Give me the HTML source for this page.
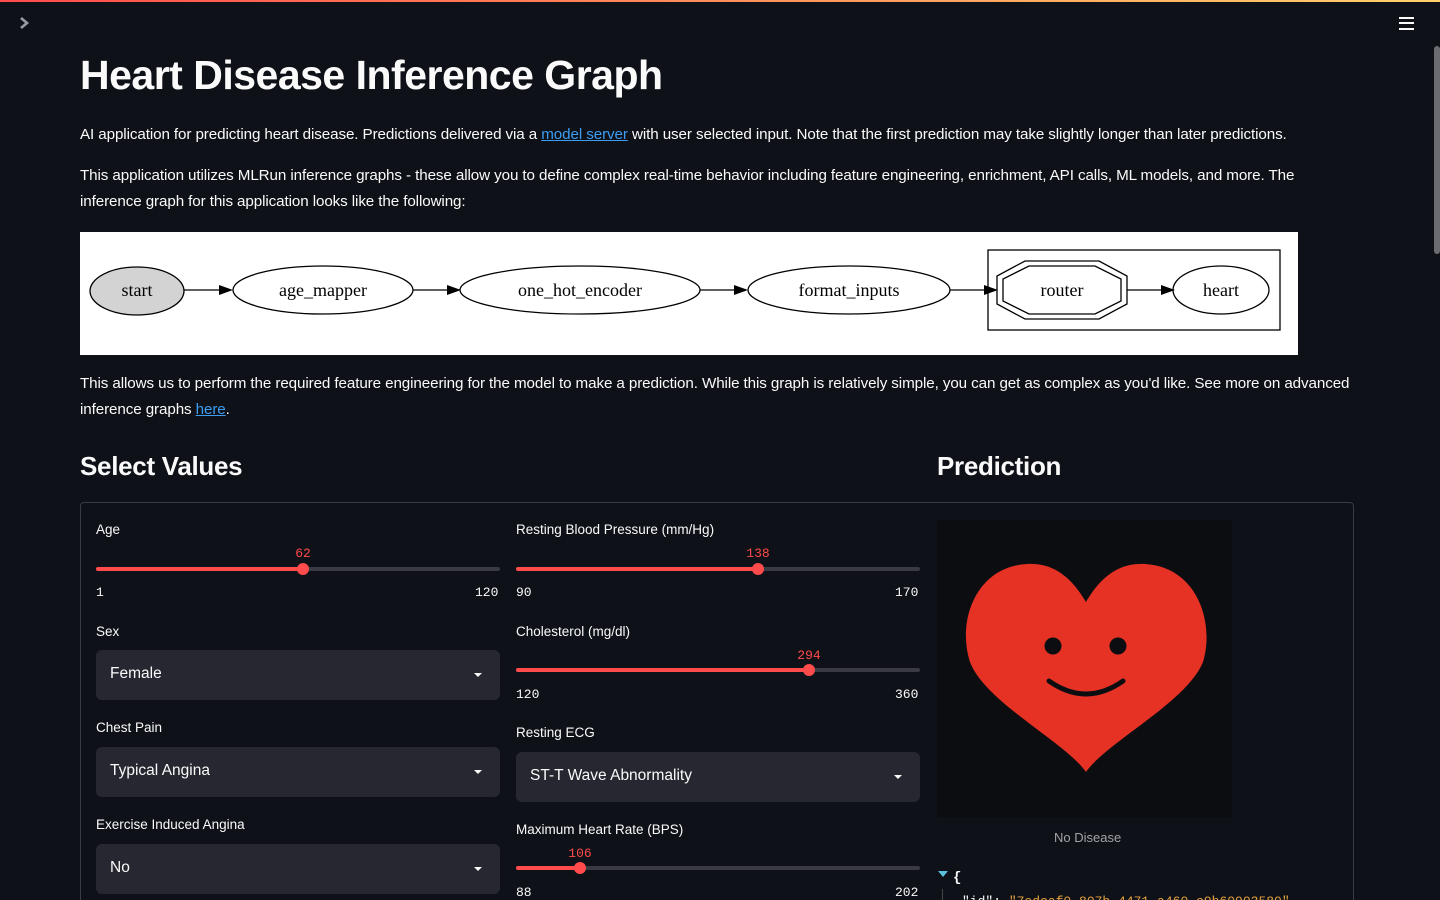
<!DOCTYPE html>
<html><head><meta charset="utf-8"><style>
*{margin:0;padding:0;box-sizing:border-box}
html,body{width:1440px;height:900px;overflow:hidden}
body{background:#0e1117;color:#fafafa;font-family:"Liberation Sans",sans-serif;position:relative}
.a{position:absolute;white-space:nowrap}
.topbar{position:absolute;left:0;top:0;width:1440px;height:2px;background:linear-gradient(90deg,#ff4b4b,#ffd16a)}
h1{position:absolute;left:80px;top:52px;font-size:41px;font-weight:700;letter-spacing:-0.5px}
p{position:absolute;left:80px;font-size:15.2px;line-height:26px;color:#fafafa}
a{color:#3d9df3;text-decoration:underline}
h2{position:absolute;font-size:26px;font-weight:700;letter-spacing:-0.3px}
.box{position:absolute;left:80px;top:502px;width:1274px;height:410px;border:1px solid #3a3c44;border-radius:4px}
.lbl{position:absolute;font-size:13.5px;color:#fafafa}
.mono{position:absolute;font-family:"Liberation Mono",monospace;font-size:13px;color:#fafafa}
.val{position:absolute;font-family:"Liberation Mono",monospace;font-size:13px;color:#ff4b4b;transform:translateX(-50%)}
.track{position:absolute;height:4px;border-radius:2px;background:#3a3b42}
.fill{position:absolute;left:0;top:0;height:4px;border-radius:2px;background:#ff4b4b}
.thumb{position:absolute;width:12px;height:12px;border-radius:50%;background:#ff4b4b;top:-4px;margin-left:-6px}
.sel{position:absolute;width:404px;height:50px;background:#262730;border-radius:6px;font-size:15.5px;padding:15px 14px}
.sel:after{content:"";position:absolute;right:18px;top:23px;border-left:4px solid transparent;border-right:4px solid transparent;border-top:4px solid #fafafa}
</style></head><body>
<div class="topbar"></div>
<svg class="a" style="left:18px;top:16px" width="12" height="14" viewBox="0 0 12 14"><path d="M3 2 L9 7 L3 12" stroke="#9a9ba2" stroke-width="2.6" fill="none"/></svg>
<div class="a" style="left:1399px;top:17px;width:15px;height:2px;background:#fafafa"></div>
<div class="a" style="left:1399px;top:22px;width:15px;height:2px;background:#fafafa"></div>
<div class="a" style="left:1399px;top:28px;width:15px;height:2px;background:#fafafa"></div>
<div class="a" style="left:1434px;top:46px;width:6px;height:208px;background:#6b6c71;border-radius:3px"></div>

<h1>Heart Disease Inference Graph</h1>
<p style="top:122px;white-space:nowrap;letter-spacing:-0.1px">AI application for predicting heart disease. Predictions delivered via a <a>model server</a> with user selected input. Note that the first prediction may take slightly longer than later predictions.</p>
<p style="top:163px;width:1240px;letter-spacing:-0.1px">This application utilizes MLRun inference graphs - these allow you to define complex real-time behavior including feature engineering, enrichment, API calls, ML models, and more. The inference graph for this application looks like the following:</p>

<svg class="a" style="left:80px;top:232px" width="1218" height="123" viewBox="80 232 1218 123">
<rect x="80" y="232" width="1218" height="123" fill="#fff"/>
<g stroke="#000" stroke-width="1.3" font-family="Liberation Serif,serif" font-size="18" text-anchor="middle">
<ellipse cx="137" cy="291" rx="47" ry="24" fill="#d3d3d3"/>
<ellipse cx="323" cy="290" rx="90" ry="24" fill="#fff"/>
<ellipse cx="580" cy="290" rx="120" ry="24" fill="#fff"/>
<ellipse cx="849" cy="290" rx="101" ry="24" fill="#fff"/>
<rect x="988" y="250" width="292" height="80" fill="none"/>
<polygon points="1025,261 1099,261 1127,276 1127,304 1099,319 1025,319 997,304 997,276" fill="none"/>
<polygon points="1029,266 1095,266 1121,279 1121,301 1095,314 1029,314 1003,301 1003,279" fill="none"/>
<ellipse cx="1221" cy="290" rx="48" ry="24" fill="#fff"/>
<path d="M184 290H222M413 290H450M700 290H737M950 290H987M1127 290H1164" fill="none"/>
<g fill="#000" stroke="none">
<polygon points="233,290 219,285 219,295"/><polygon points="461,290 447,285 447,295"/><polygon points="748,290 734,285 734,295"/><polygon points="998,290 984,285 984,295"/><polygon points="1175,290 1161,285 1161,295"/>
<text x="137" y="296">start</text><text x="323" y="296">age_mapper</text><text x="580" y="296">one_hot_encoder</text><text x="849" y="296">format_inputs</text><text x="1062" y="296">router</text><text x="1221" y="296">heart</text>
</g></g></svg>

<p style="top:371px;width:1290px;letter-spacing:-0.1px">This allows us to perform the required feature engineering for the model to make a prediction. While this graph is relatively simple, you can get as complex as you'd like. See more on advanced inference graphs <a>here</a>.</p>

<h2 style="left:80px;top:451px">Select Values</h2>
<h2 style="left:937px;top:451px">Prediction</h2>
<div class="box"></div>

<div class="lbl" style="left:96px;top:522px">Age</div>
<div class="val" style="left:303px;top:546px">62</div>
<div class="track" style="left:96px;top:567px;width:404px"><div class="fill" style="width:207px"></div><div class="thumb" style="left:207px"></div></div>
<div class="mono" style="left:96px;top:585px">1</div><div class="mono" style="left:475px;top:585px">120</div>

<div class="lbl" style="left:96px;top:624px">Sex</div>
<div class="sel" style="left:96px;top:650px">Female</div>
<div class="lbl" style="left:96px;top:720px">Chest Pain</div>
<div class="sel" style="left:96px;top:747px">Typical Angina</div>
<div class="lbl" style="left:96px;top:817px">Exercise Induced Angina</div>
<div class="sel" style="left:96px;top:844px">No</div>

<div class="lbl" style="left:516px;top:522px">Resting Blood Pressure (mm/Hg)</div>
<div class="val" style="left:758px;top:546px">138</div>
<div class="track" style="left:516px;top:567px;width:404px"><div class="fill" style="width:242px"></div><div class="thumb" style="left:242px"></div></div>
<div class="mono" style="left:516px;top:585px">90</div><div class="mono" style="left:895px;top:585px">170</div>

<div class="lbl" style="left:516px;top:624px">Cholesterol (mg/dl)</div>
<div class="val" style="left:809px;top:648px">294</div>
<div class="track" style="left:516px;top:668px;width:404px"><div class="fill" style="width:293px"></div><div class="thumb" style="left:293px"></div></div>
<div class="mono" style="left:516px;top:687px">120</div><div class="mono" style="left:895px;top:687px">360</div>

<div class="lbl" style="left:516px;top:725px">Resting ECG</div>
<div class="sel" style="left:516px;top:752px">ST-T Wave Abnormality</div>

<div class="lbl" style="left:516px;top:822px">Maximum Heart Rate (BPS)</div>
<div class="val" style="left:580px;top:846px">106</div>
<div class="track" style="left:516px;top:866px;width:404px"><div class="fill" style="width:64px"></div><div class="thumb" style="left:64px"></div></div>
<div class="mono" style="left:516px;top:885px">88</div><div class="mono" style="left:895px;top:885px">202</div>

<div class="a" style="left:937px;top:520px;width:295px;height:297px;background:#0c0d11"></div>
<svg class="a" style="left:965px;top:562px" width="243" height="212" viewBox="0 0 243 212">
<path d="M121 210 C100 180 20 140 5 100 C-8 60 10 5 62 2 C95 0 112 25 121 40 C130 25 147 0 180 2 C232 5 250 60 238 100 C222 140 142 180 121 210Z" fill="#e53224"/>
<circle cx="88" cy="84" r="8.5" fill="#0c0d11"/><circle cx="153" cy="84" r="8.5" fill="#0c0d11"/>
<path d="M84 119 Q121 145 158 119" stroke="#0c0d11" stroke-width="5" fill="none" stroke-linecap="round"/>
</svg>
<div class="a" style="left:1054px;top:830px;font-size:13px;color:#a3a4a9">No Disease</div>
<div class="a" style="left:938px;top:871px;border-left:5px solid transparent;border-right:5px solid transparent;border-top:6px solid #5bc0de"></div>
<div class="a" style="left:953px;top:870px;font-family:'Liberation Mono',monospace;font-size:14px;font-weight:700">{</div>
<div class="a" style="left:942px;top:889px;width:1px;height:11px;background:#444"></div>
<div class="a" style="left:962px;top:894px;font-family:'Liberation Mono',monospace;font-size:13px;color:#fafafa">"id": <span style="color:#e6a23c">"7edcaf0-807b-4471-a460-c9b60903580"</span></div>
</body></html>
